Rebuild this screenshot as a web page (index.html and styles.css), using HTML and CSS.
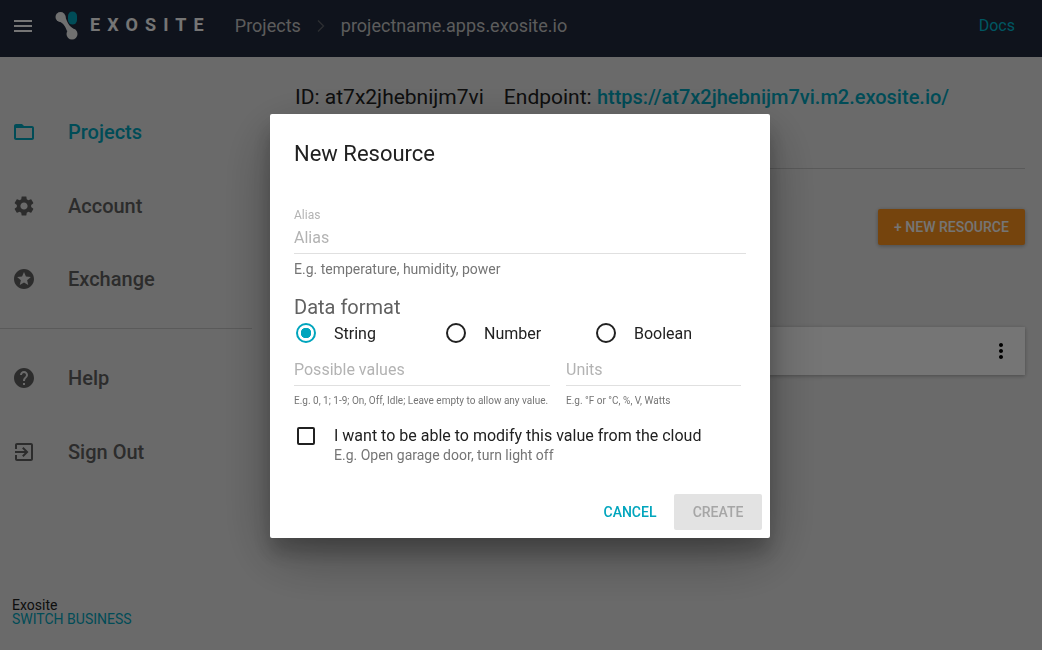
FILE: index.html
```html
<!DOCTYPE html>
<html lang="en">
<head>
  <meta charset="UTF-8" />
  <title>New Resource - Exosite</title>
  <link rel="stylesheet" href="styles.css">
</head>
<body>

  <header class="topbar">
    <svg class="menu-icon" width="24" height="24" viewBox="0 0 24 24"><path d="M3 18h18v-2H3v2zm0-5h18v-2H3v2zm0-7v2h18V6H3z"/></svg>
    <svg class="logo-mark" width="24" height="30" viewBox="0 0 24 30">
      <circle cx="5.5" cy="6" r="5" fill="#f4f4f4"/>
      <circle cx="17" cy="23" r="5.5" fill="#f4f4f4"/>
      <path d="M2 9.5 C7 11 10 14 12 20 L21 19 C16 17 12 13 10 4z" fill="#f4f4f4"/>
      <rect x="13" y="0.5" width="9" height="13" rx="4.5" fill="#00a5bd"/>
    </svg>
    <span class="logo-text">EXOSITE</span>
    <span class="crumb">Projects</span>
    <svg class="crumb-sep" width="24" height="24" viewBox="0 0 24 24"><path d="M9 6.5l5.5 5.5L9 17.5" fill="none" stroke="#5f636b" stroke-width="1.4"/></svg>
    <span class="crumb crumb-last">projectname.apps.exosite.io</span>
    <a class="docs" href="#">Docs</a>
  </header>

  <div class="page">
    <nav class="sidebar">
      <div class="nav-item active">
        <svg width="24" height="24" viewBox="0 0 24 24"><path d="M20 6h-8l-2-2H4c-1.1 0-2 .9-2 2v12c0 1.1.9 2 2 2h16c1.1 0 2-.9 2-2V8c0-1.1-.9-2-2-2zm0 12H4V8h16v10z"/></svg>
        <span>Projects</span>
      </div>
      <div class="nav-item">
        <svg width="24" height="24" viewBox="0 0 24 24"><path d="M19.14 12.94c.04-.3.06-.61.06-.94 0-.32-.02-.64-.07-.94l2.03-1.58c.18-.14.23-.41.12-.61l-1.92-3.32c-.12-.22-.37-.29-.59-.22l-2.39.96c-.5-.38-1.03-.7-1.62-.94l-.36-2.54c-.04-.24-.24-.41-.48-.41h-3.84c-.24 0-.43.17-.47.41l-.36 2.54c-.59.24-1.13.57-1.62.94l-2.39-.96c-.22-.08-.47 0-.59.22L2.74 8.87c-.12.21-.08.47.12.61l2.03 1.58c-.05.3-.09.63-.09.94s.02.64.07.94l-2.03 1.58c-.18.14-.23.41-.12.61l1.92 3.32c.12.22.37.29.59.22l2.39-.96c.5.38 1.03.7 1.62.94l.36 2.54c.05.24.24.41.48.41h3.84c.24 0 .44-.17.47-.41l.36-2.54c.59-.24 1.13-.56 1.62-.94l2.39.96c.22.08.47 0 .59-.22l1.92-3.32c.12-.22.07-.47-.12-.61l-2.01-1.58zM12 15.6c-1.98 0-3.6-1.62-3.6-3.6s1.62-3.6 3.6-3.6 3.6 1.62 3.6 3.6-1.62 3.6-3.6 3.6z"/></svg>
        <span>Account</span>
      </div>
      <div class="nav-item">
        <svg width="24" height="24" viewBox="0 0 24 24"><path d="M11.99 2C6.47 2 2 6.48 2 12s4.47 10 9.99 10C17.52 22 22 17.52 22 12S17.52 2 11.99 2zm4.24 16L12 15.45 7.77 18l1.12-4.81-3.73-3.23 4.92-.42L12 5l1.92 4.53 4.92.42-3.73 3.23L16.23 18z"/></svg>
        <span>Exchange</span>
      </div>
      <hr class="nav-rule">
      <div class="nav-item">
        <svg width="24" height="24" viewBox="0 0 24 24"><path d="M12 2C6.48 2 2 6.48 2 12s4.48 10 10 10 10-4.48 10-10S17.52 2 12 2zm1 17h-2v-2h2v2zm2.07-7.75l-.9.92C13.45 12.9 13 13.5 13 15h-2v-.5c0-1.1.45-2.1 1.17-2.83l1.24-1.26c.37-.36.59-.86.59-1.41 0-1.1-.9-2-2-2s-2 .9-2 2H8c0-2.21 1.79-4 4-4s4 1.79 4 4c0 .88-.36 1.68-.93 2.25z"/></svg>
        <span>Help</span>
      </div>
      <div class="nav-item">
        <svg width="24" height="24" viewBox="0 0 24 24"><path d="M10.09 15.59L11.5 17l5-5-5-5-1.41 1.41L12.67 11H3v2h9.67l-2.58 2.59zM19 3H5c-1.11 0-2 .9-2 2v4h2V5h14v14H5v-4H3v4c0 1.1.89 2 2 2h14c1.1 0 2-.9 2-2V5c0-1.1-.9-2-2-2z"/></svg>
        <span>Sign Out</span>
      </div>
      <div class="business">
        <div>Exosite</div>
        <a href="#">SWITCH BUSINESS</a>
      </div>
    </nav>

    <main class="content">
      <div class="project-info">
        <span>ID: at7x2jhebnijm7vi</span>
        <span>Endpoint: <a href="#">https://at7x2jhebnijm7vi.m2.exosite.io/</a></span>
      </div>
      <hr class="content-rule">
      <div class="actions"><button class="new-btn">+ NEW RESOURCE</button></div>
      <div class="resource-card">
        <svg width="24" height="24" viewBox="0 0 24 24"><path d="M12 8c1.1 0 2-.9 2-2s-.9-2-2-2-2 .9-2 2 .9 2 2 2zm0 2c-1.1 0-2 .9-2 2s.9 2 2 2 2-.9 2-2-.9-2-2-2zm0 6c-1.1 0-2 .9-2 2s.9 2 2 2 2-.9 2-2-.9-2-2-2z"/></svg>
      </div>
    </main>
  </div>

  <div class="overlay">
    <div class="dialog">
      <h2>New Resource</h2>

      <div class="field alias">
        <label>Alias</label>
        <div class="input">Alias</div>
        <p class="hint">E.g. temperature, humidity, power</p>
      </div>

      <h3>Data format</h3>
      <div class="radios">
        <div class="radio checked"><i></i><span>String</span></div>
        <div class="radio"><i></i><span>Number</span></div>
        <div class="radio"><i></i><span>Boolean</span></div>
      </div>

      <div class="field-row">
        <div class="field values">
          <div class="input">Possible values</div>
          <p class="hint small">E.g. 0, 1; 1-9; On, Off, Idle; Leave empty to allow any value.</p>
        </div>
        <div class="field units">
          <div class="input">Units</div>
          <p class="hint small">E.g. °F or °C, %, V, Watts</p>
        </div>
      </div>

      <div class="check-row">
        <i class="box"></i>
        <div>
          <div class="check-label">I want to be able to modify this value from the cloud</div>
          <div class="check-hint">E.g. Open garage door, turn light off</div>
        </div>
      </div>

      <div class="dialog-actions">
        <button class="cancel">CANCEL</button>
        <button class="create">CREATE</button>
      </div>
    </div>
  </div>

</body>
</html>
```

FILE: styles.css
```css
* {
  box-sizing: border-box;
}

body {
  margin: 0;
  height: 650px;
  overflow: hidden;
  font-family: 'Roboto', sans-serif;
  background: #e8e8e8;
  color: #212121;
}

a {
  color: #00a5bd;
  text-decoration: none;
}

.topbar {
  height: 57px;
  background: #212a3d;
  display: flex;
  align-items: center;
  padding: 0 27px 6px 11px;
  color: #fff;
}

.menu-icon {
  fill: #fff;
  flex: none;
}

.logo-mark {
  margin-left: 20px;
  flex: none;
}

.logo-text {
  margin-left: 11px;
  margin-top: -2px;
  font-size: 18px;
  font-weight: 700;
  letter-spacing: 7.1px;
  color: #fff;
}

.crumb {
  font-size: 18px;
  color: #c8c8c8;
  margin-left: 24px;
}

.crumb-sep {
  margin-left: 8px;
}

.crumb-last {
  margin-left: 8px;
}

.docs {
  margin-left: auto;
  font-size: 16px;
  color: #00bcd4;
}

.page {
  display: flex;
  height: 593px;
}

.sidebar {
  width: 252px;
  flex: none;
  padding-top: 38.3px;
  display: flex;
  flex-direction: column;
}

.nav-item {
  height: 73.5px;
  flex: none;
  display: flex;
  align-items: center;
  padding-left: 12px;
  font-size: 20px;
  font-weight: 500;
  color: #616161;
}

.nav-item svg {
  fill: #616161;
  margin-right: 32px;
  flex: none;
}

.nav-item.active {
  color: #00a5bd;
}

.nav-item.active svg {
  fill: #00a5bd;
}

.nav-rule {
  width: 100%;
  margin: 12px 0 12.5px;
  border: 0;
  border-top: 1px solid #c4c4c4;
}

.business {
  margin-top: auto;
  padding: 0 0 24px 12px;
  font-size: 14px;
  line-height: 14px;
  color: #212121;
}

.content {
  flex: 1;
  padding: 26px 17px 0 43px;
}

.project-info {
  display: flex;
  gap: 20px;
  font-size: 21px;
  line-height: 28px;
  color: #212121;
}

.project-info a {
  font-size: 20px;
  font-weight: 500;
}

.content-rule {
  margin: 57px 0 0;
  border: 0;
  border-top: 1px solid #c4c4c4;
}

.actions {
  display: flex;
  justify-content: flex-end;
  margin-top: 40px;
}

.new-btn {
  width: 147px;
  height: 36px;
  border: 0;
  border-radius: 2px;
  background: #fe951e;
  color: #fff;
  font-family: inherit;
  font-size: 14px;
  font-weight: 500;
  box-shadow: 0 1px 4px rgba(0,0,0,0.3);
}

.resource-card {
  margin-top: 82px;
  height: 48px;
  background: #fff;
  box-shadow: 0 1px 4px rgba(0,0,0,0.3);
  display: flex;
  align-items: center;
  justify-content: flex-end;
  padding-right: 12px;
}

.overlay {
  position: fixed;
  inset: 0;
  background: rgba(0,0,0,0.54);
  display: flex;
  justify-content: center;
  align-items: flex-start;
  padding: 114px 2px 0 0;
}

.dialog {
  width: 500px;
  height: 424px;
  background: #fff;
  border-radius: 2px;
  padding: 24px 24px 0;
  box-shadow: 0 19px 60px rgba(0,0,0,0.3), 0 15px 20px rgba(0,0,0,0.22);
}

.dialog h2 {
  margin: 0;
  font-size: 22px;
  font-weight: 400;
  line-height: 32px;
  color: #212121;
}

.field label {
  display: block;
  margin-bottom: 4px;
  font-size: 12px;
  line-height: 13px;
  color: #b3b3b3;
}

.field .input {
  height: 28px;
  border-bottom: 1px solid #e0e0e0;
  font-size: 16px;
  line-height: 24px;
  color: #b3b3b3;
}

.alias {
  margin-top: 39px;
}

.hint {
  margin: 7px 0 0;
  font-size: 14px;
  line-height: 16px;
  color: #757575;
}

.hint.small {
  font-size: 10px;
  line-height: 12px;
  margin-top: 9px;
}

.dialog h3 {
  margin: 18px 0 0;
  font-size: 20px;
  font-weight: 400;
  line-height: 24px;
  color: #616161;
}

.radios {
  display: flex;
  margin-top: 2px;
  padding-left: 2px;
}

.radio {
  width: 150px;
  display: flex;
  align-items: center;
  gap: 18px;
  height: 24px;
  font-size: 16px;
  color: #212121;
}

.radio i {
  width: 20px;
  height: 20px;
  border: 2px solid #212121;
  border-radius: 50%;
  flex: none;
}

.radio.checked i {
  border-color: #00a5bd;
  background: radial-gradient(circle, #00a5bd 0 5px, #fff 5.5px);
}

.field-row {
  display: flex;
  gap: 16px;
  margin-top: 13px;
}

.values {
  width: 256px;
}

.units {
  width: 175px;
}

.check-row {
  display: flex;
  margin-top: 19px;
  padding-left: 3px;
}

.box {
  width: 18px;
  height: 18px;
  margin: 1px 19px 0 0;
  border: 2px solid #212121;
  border-radius: 2px;
  flex: none;
}

.check-label {
  font-size: 16px;
  line-height: 20px;
  color: #212121;
}

.check-hint {
  font-size: 14px;
  line-height: 18px;
  color: #757575;
}

.dialog-actions {
  display: flex;
  justify-content: flex-end;
  align-items: center;
  gap: 8px;
  margin: 30px -16px 0 0;
}

.dialog-actions button {
  height: 36px;
  border: 0;
  border-radius: 2px;
  font-family: inherit;
  font-size: 14px;
  font-weight: 500;
}

.cancel {
  width: 72px;
  background: transparent;
  color: #00a5bd;
}

.create {
  width: 88px;
  background: #e3e3e3;
  color: #a6a6a6;
}
```
